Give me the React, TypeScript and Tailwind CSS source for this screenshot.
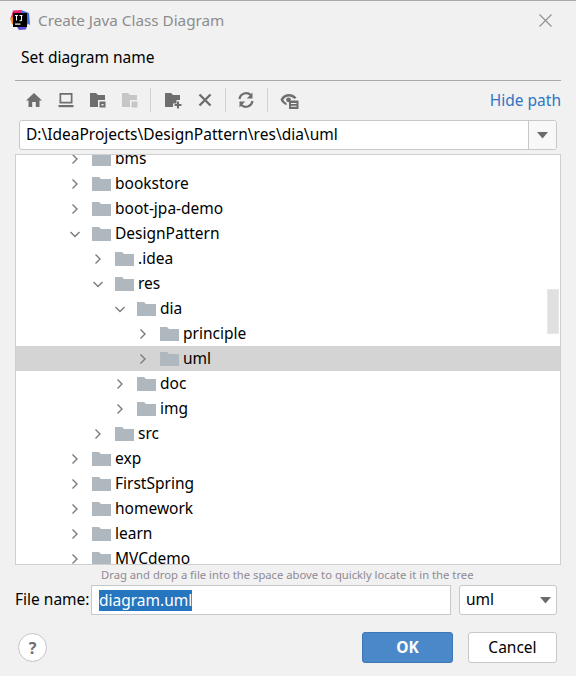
const FONT = "font-['Noto_Sans','Open_Sans',sans-serif]";

type Row = { name: string; depth: 0 | 1 | 2 | 3; open?: boolean; selected?: boolean };

const ROWS: Row[] = [
  { name: "bms", depth: 0 },
  { name: "bookstore", depth: 0 },
  { name: "boot-jpa-demo", depth: 0 },
  { name: "DesignPattern", depth: 0, open: true },
  { name: ".idea", depth: 1 },
  { name: "res", depth: 1, open: true },
  { name: "dia", depth: 2, open: true },
  { name: "principle", depth: 3 },
  { name: "uml", depth: 3, selected: true },
  { name: "doc", depth: 2 },
  { name: "img", depth: 2 },
  { name: "src", depth: 1 },
  { name: "exp", depth: 0 },
  { name: "FirstSpring", depth: 0 },
  { name: "homework", depth: 0 },
  { name: "learn", depth: 0 },
  { name: "MVCdemo", depth: 0 },
];

const INDENT = ["pl-[53px]", "pl-[76px]", "pl-[98px]", "pl-[121px]"];

function Logo() {
  return (
    <svg width="20" height="20" viewBox="0 0 20 20">
      <path d="M3 0.5 L12 0 L10 8 L0.5 9 Z" fill="#e8236f" />
      <path d="M11 0 L19 3 L20 15 L12 10 Z" fill="#3f6fe0" />
      <path d="M0 8 L6 6 L7 16 L2 14 Z" fill="#f58a1f" />
      <path d="M5 14 L18 12 L16 19.5 L9 20 Z" fill="#5a4fd8" />
      <rect x="3" y="3" width="14" height="14" fill="#000" />
      <path d="M5 5.5h3M6.5 5.5v5M9.5 5.5h3M11.5 5.5v4.2q0 1-1 1h-1" stroke="#fff" strokeWidth="1.1" fill="none" />
      <rect x="5" y="13.5" width="5.5" height="1.2" fill="#fff" />
    </svg>
  );
}

function Chevron({ open }: { open?: boolean }) {
  return (
    <svg width="12" height="12" viewBox="0 0 12 12" className="shrink-0">
      <path
        d={open ? "M1.5 4 L6 8.5 L10.5 4" : "M3.5 1.5 L8 6 L3.5 10.5"}
        fill="none"
        stroke="#7a7a7a"
        strokeWidth="1.4"
      />
    </svg>
  );
}

function Folder() {
  return (
    <svg width="19" height="16" viewBox="0 0 19 16" className="shrink-0">
      <path d="M0 1 H7 L9 3 H19 V15 H0 Z" fill="#afb8bf" />
    </svg>
  );
}

function ToolIcon({ children, w = 18 }: { children: React.ReactNode; w?: number }) {
  return (
    <svg width={w} height="18" viewBox={`0 0 ${w} 18`} className="shrink-0">
      {children}
    </svg>
  );
}

function Divider() {
  return <div className="h-[24px] w-px bg-[#d2d2d2]" />;
}

function Toolbar() {
  return (
    <div className="flex h-[39px] items-center pb-[2px] pl-[10px]">
      <div className="flex items-center gap-[14px]">
        <ToolIcon>
          <path d="M9 2 L17 9.5 H14.5 V16 H10.8 V11 H7.2 V16 H3.5 V9.5 H1 Z" fill="#6e6e6e" />
        </ToolIcon>
        <ToolIcon>
          <path d="M2.5 2h13v10.5h-13z M4.2 3.7v7.1h9.6v-7.1z" fill="#6e6e6e" fillRule="evenodd" />
          <rect x="1.5" y="14" width="15" height="2.2" fill="#6e6e6e" />
        </ToolIcon>
        <ToolIcon>
          <path d="M1 2 H7 L9 4 H16 V9 H9 V16 H1 Z" fill="#6e6e6e" />
          <path d="M10.5 10.5h6v6h-6z M12.5 13v1.5h2V13z" fill="#6e6e6e" fillRule="evenodd" />
        </ToolIcon>
        <ToolIcon>
          <path d="M1 2 H7 L9 4 H16 V9 H9 V16 H1 Z" fill="#c6c6c6" />
          <path d="M10.5 10.5h6v6h-6z" fill="#c6c6c6" />
        </ToolIcon>
      </div>
      <div className="ml-[11px]"><Divider /></div>
      <div className="ml-[13px] flex items-center gap-[14px]">
        <ToolIcon>
          <path d="M1 2 H7 L9 4 H16 V9 H12.5 V12.5 H9 V16 H1 Z" fill="#6e6e6e" />
          <path d="M14 10.5v7M10.5 14h7" stroke="#6e6e6e" strokeWidth="2" />
        </ToolIcon>
        <ToolIcon>
          <path d="M3.5 3.5 L14.5 14.5 M14.5 3.5 L3.5 14.5" stroke="#6e6e6e" strokeWidth="2.4" />
        </ToolIcon>
      </div>
      <div className="ml-[11px]"><Divider /></div>
      <div className="ml-[11px]">
        <ToolIcon>
          <path d="M2.5 8 A6.8 6.8 0 0 1 14 4.2" fill="none" stroke="#6e6e6e" strokeWidth="2.2" />
          <path d="M15.5 1.5 V7.5 H9.8 Z" fill="#6e6e6e" />
          <path d="M15.5 10 A6.8 6.8 0 0 1 4 13.8" fill="none" stroke="#6e6e6e" strokeWidth="2.2" />
          <path d="M2.5 16.5 V10.5 H8.2 Z" fill="#6e6e6e" />
        </ToolIcon>
      </div>
      <div className="ml-[12px]"><Divider /></div>
      <div className="ml-[12px]">
        <ToolIcon w={20}>
          <path d="M0.5 8.5 C3 2.5 11.5 0.5 16.5 6.5 L14.5 8 C11 4.5 6 4.5 3.3 8.8 C4 10.3 5 11.3 6.5 12 V14.2 C3.7 13.2 1.7 11.3 0.5 8.5 Z" fill="#6e6e6e" />
          <circle cx="8.5" cy="8.8" r="2.4" fill="#6e6e6e" />
          <path d="M9 9.5h9.5v8.5H9z M11 12v1h5.5v-1z M11 14.7v1h5.5v-1z" fill="#6e6e6e" fillRule="evenodd" />
        </ToolIcon>
      </div>
      <span className="ml-auto mt-[2px] text-[15.5px] leading-none text-[#2f75c5]">Hide path</span>
    </div>
  );
}

function Caret() {
  return (
    <svg width="11" height="7" viewBox="0 0 11 7">
      <path d="M0 0 H11 L5.5 6.5 Z" fill="#6b6b6b" />
    </svg>
  );
}

function Tree() {
  return (
    <div className="relative mt-[4px] h-[411px] overflow-hidden border border-[#d0d0d0] bg-white">
      <div className="-mt-[9px]">
        {ROWS.map((r) => (
          <div
            key={r.name}
            className={`flex h-[25px] items-center ${INDENT[r.depth]} ${r.selected ? "bg-[#d4d4d4]" : ""}`}
          >
            <Chevron open={r.open} />
            <div className="ml-[11px] flex"><Folder /></div>
            <span className="ml-[4px] text-[15.5px] text-black">{r.name}</span>
          </div>
        ))}
      </div>
      {/* overlay scrollbar thumb */}
      <div className="absolute right-[1px] top-[134px] h-[45px] w-[12px] border border-[#e8e8e8] bg-[#e0e0e0]" />
    </div>
  );
}

export default function App() {
  return (
    <div className={`flex h-[676px] w-[576px] flex-col border-t border-[#a9a9a9] bg-[#f1f1f1] ${FONT}`}>
      <div className="flex h-[38px] items-center pl-[10px] pr-[24px]">
        <Logo />
        <span className="ml-[8px] text-[15.25px] text-[#8c8c8c]">Create Java Class Diagram</span>
        <svg width="13" height="13" viewBox="0 0 13 13" className="ml-auto">
          <path d="M0.5 0.5 L12.5 12.5 M12.5 0.5 L0.5 12.5" stroke="#8f8f8f" strokeWidth="1.1" />
        </svg>
      </div>

      <div className="pl-[21px] pt-[7px] text-[15.5px] leading-[22px] text-black">Set diagram name</div>

      <div className="mx-[15px] mt-[12px] flex flex-col">
        <div className="h-px bg-[#a9a9a9]" />
        <Toolbar />

        <div className="mx-[4px] flex h-[30px] overflow-hidden rounded-[3px] border border-[#c8c8c8] bg-white">
          <span className="flex flex-1 items-center pl-[6px] text-[15.5px] text-black">
            D:\IdeaProjects\DesignPattern\res\dia\uml
          </span>
          <div className="flex w-[28px] items-center justify-center border-l border-[#c8c8c8] bg-[#f8f8f8]">
            <Caret />
          </div>
        </div>

        <Tree />
      </div>

      <div className="pl-[101px] pt-[1px] text-[11.25px] leading-[17px] text-[#8f8a95]">
        Drag and drop a file into the space above to quickly locate it in the tree
      </div>

      <div className="mt-[2px] flex h-[30px] items-center pl-[15px] pr-[19px]">
        <span className="w-[76px] text-[15.5px] text-black">File name:</span>
        <div className="flex h-full w-[360px] items-center border border-[#c8c8c8] bg-white pl-[7px]">
          <span className="bg-[#2675bf] text-[15.5px] leading-[21px] text-white">diagram.uml</span>
        </div>
        <div className="ml-[8px] flex h-full flex-1 items-center justify-between rounded-[3px] border border-[#c8c8c8] bg-white pl-[6px] pr-[5px]">
          <span className="text-[15.5px] text-black">uml</span>
          <Caret />
        </div>
      </div>

      <div className="mt-[17px] flex h-[31px] items-center pl-[18px] pr-[19px]">
        <div className="flex h-[29px] w-[29px] items-center justify-center rounded-full border border-[#c4c4c4] bg-white text-[16px] font-bold text-[#6e6e6e]">
          ?
        </div>
        <div className="ml-auto flex h-[31px] w-[91px] items-center justify-center rounded-[3px] border border-[#3f76b5] bg-[#4a88c9] text-[15.5px] font-bold text-white">
          OK
        </div>
        <div className="ml-[15px] flex h-[31px] w-[89px] items-center justify-center rounded-[3px] border border-[#c8c8c8] bg-white text-[15.5px] text-black">
          Cancel
        </div>
      </div>
    </div>
  );
}
